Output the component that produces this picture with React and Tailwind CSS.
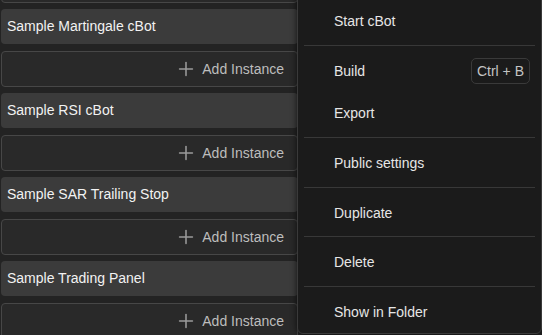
import React from "react";
import { Plus } from "lucide-react";

const bots = [
  "Sample Martingale cBot",
  "Sample RSI cBot",
  "Sample SAR Trailing Stop",
  "Sample Trading Panel",
];

const InstanceBox = ({ empty }) => (
  <div className="h-[36px] mb-[6px] rounded-[4px] border border-[#474747] bg-[#292929] flex items-center justify-end pr-[13px] text-[#bdbdbd]">
    {!empty && (
      <>
        <Plus size={22} strokeWidth={1.7} className="text-[#9a9a9a] mr-[5px]" />
        <span>Add Instance</span>
      </>
    )}
  </div>
);

const MenuItem = ({ label, shortcut }) => (
  <div className="h-[42px] flex items-center justify-between pl-[36px] pr-[11px] text-[#e6e6e6]">
    <span>{label}</span>
    {shortcut && (
      <span className="h-[26px] px-[5px] flex items-center rounded-[5px] border border-[#3a3a3a] text-[#c4c4c4]">
        {shortcut}
      </span>
    )}
  </div>
);

const Separator = ({ tight }) => (
  <div className={tight ? "h-px bg-[#383838] mx-[6px] mt-[2px] mb-[4px]" : "h-px bg-[#383838] mx-[6px] mt-[3px] mb-[4px]"} />
);

export default function App() {
  return (
    <div
      className="relative w-[542px] h-[335px] overflow-hidden bg-[#232323] text-[14px]"
      style={{ fontFamily: '"Liberation Sans", Arial, sans-serif' }}
    >
      {/* list of cBots */}
      <div className="w-[298px] pl-[1px] -mt-[33px] flex flex-col">
        <InstanceBox empty />
        {bots.map((name) => (
          <React.Fragment key={name}>
            <div className="h-[35px] mb-[7px] rounded-[4px] bg-[#3b3b3b] flex items-center pl-[6px] text-[#f2f2f2]">
              {name}
            </div>
            <InstanceBox />
          </React.Fragment>
        ))}
      </div>

      {/* context menu */}
      <div className="absolute left-[297px] top-[-10px] w-[245px] h-[344px] pt-[9px] bg-[#1b1b1b] border border-[#3a3a3a] rounded-[6px] shadow-[0_0_6px_rgba(0,0,0,0.7)]">
        <MenuItem label="Start cBot" />
        <Separator />
        <MenuItem label="Build" shortcut="Ctrl + B" />
        <MenuItem label="Export" />
        <Separator />
        <MenuItem label="Public settings" />
        <Separator />
        <MenuItem label="Duplicate" />
        <Separator tight />
        <MenuItem label="Delete" />
        <Separator />
        <MenuItem label="Show in Folder" />
      </div>
    </div>
  );
}
